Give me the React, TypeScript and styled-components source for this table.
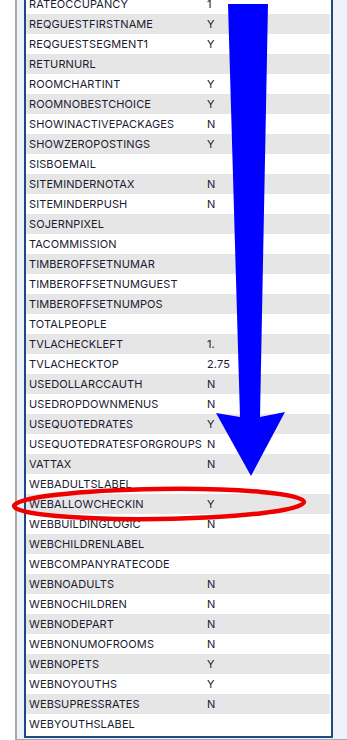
import * as React from 'react';
import styled, { createGlobalStyle } from 'styled-components';

const settings: [string, string][] = [
  ['RATEOCCUPANCY', '1'],
  ['REQGUESTFIRSTNAME', 'Y'],
  ['REQGUESTSEGMENT1', 'Y'],
  ['RETURNURL', ''],
  ['ROOMCHARTINT', 'Y'],
  ['ROOMNOBESTCHOICE', 'Y'],
  ['SHOWINACTIVEPACKAGES', 'N'],
  ['SHOWZEROPOSTINGS', 'Y'],
  ['SISBOEMAIL', ''],
  ['SITEMINDERNOTAX', 'N'],
  ['SITEMINDERPUSH', 'N'],
  ['SOJERNPIXEL', ''],
  ['TACOMMISSION', ''],
  ['TIMBEROFFSETNUMAR', ''],
  ['TIMBEROFFSETNUMGUEST', ''],
  ['TIMBEROFFSETNUMPOS', ''],
  ['TOTALPEOPLE', ''],
  ['TVLACHECKLEFT', '1.'],
  ['TVLACHECKTOP', '2.75'],
  ['USEDOLLARCCAUTH', 'N'],
  ['USEDROPDOWNMENUS', 'N'],
  ['USEQUOTEDRATES', 'Y'],
  ['USEQUOTEDRATESFORGROUPS', 'N'],
  ['VATTAX', 'N'],
  ['WEBADULTSLABEL', ''],
  ['WEBALLOWCHECKIN', 'Y'],
  ['WEBBUILDINGLOGIC', 'N'],
  ['WEBCHILDRENLABEL', ''],
  ['WEBCOMPANYRATECODE', ''],
  ['WEBNOADULTS', 'N'],
  ['WEBNOCHILDREN', 'N'],
  ['WEBNODEPART', 'N'],
  ['WEBNONUMOFROOMS', 'N'],
  ['WEBNOPETS', 'Y'],
  ['WEBNOYOUTHS', 'Y'],
  ['WEBSUPRESSRATES', 'N'],
  ['WEBYOUTHSLABEL', ''],
];

const App: React.FC = () => {
  return (
    <>
      <GlobalStyle />
      <Page>
        <Frame>
          <Panel>
            {settings.map(([name, value], i) => (
              <Row key={name} $striped={i % 2 === 1}>
                <Cell>{name}</Cell>
                <Cell>{value}</Cell>
              </Row>
            ))}
          </Panel>
        </Frame>
        {/* markup drawn over the table */}
        <Overlay width="347" height="740" viewBox="0 0 347 740">
          <polygon
            points="228,4 268,4 260,417 285,412 251,476 216,413 240,417"
            fill="#0000ff"
          />
          <ellipse
            cx="159"
            cy="504"
            rx="145"
            ry="15"
            fill="none"
            stroke="#ee0000"
            strokeWidth="4.5"
            transform="rotate(-0.8 159 504)"
          />
        </Overlay>
      </Page>
    </>
  );
};

export default App;

const GlobalStyle = createGlobalStyle`
  body {
    margin: 0;
    background: #fff;
    overflow: hidden;
  }
`;

const Page = styled.div`
  position: relative;
  height: 740px;
  padding-left: 15px;
  box-sizing: border-box;
  overflow: hidden;
`;

const Frame = styled.div`
  height: 740px;
  box-sizing: border-box;
  border-left: 2px solid #a8a8a8;
  border-bottom: 1px solid #a8a8a8;
  background: #eef2fa;
  padding: 0 14px 0 7px;
  overflow: hidden;
`;

const Panel = styled.div`
  margin-top: -8px;
  border: 2px solid #1d4a86;
  padding: 0 1px 2px 0;
  background: #fff;
`;

const Row = styled.div<{ $striped: boolean }>`
  display: grid;
  grid-template-columns: 178px 1fr;
  height: 20px;
  align-items: center;
  background: ${p => (p.$striped ? '#e6e6e6' : '#fff')};
  font-family: Inter, sans-serif;
  font-size: 11px;
  letter-spacing: 0.1px;
  color: #1a1a30;
`;

const Cell = styled.div`
  padding-left: 3px;
  white-space: nowrap;
`;

const Overlay = styled.svg`
  position: absolute;
  left: 0;
  top: 0;
  pointer-events: none;
`;
